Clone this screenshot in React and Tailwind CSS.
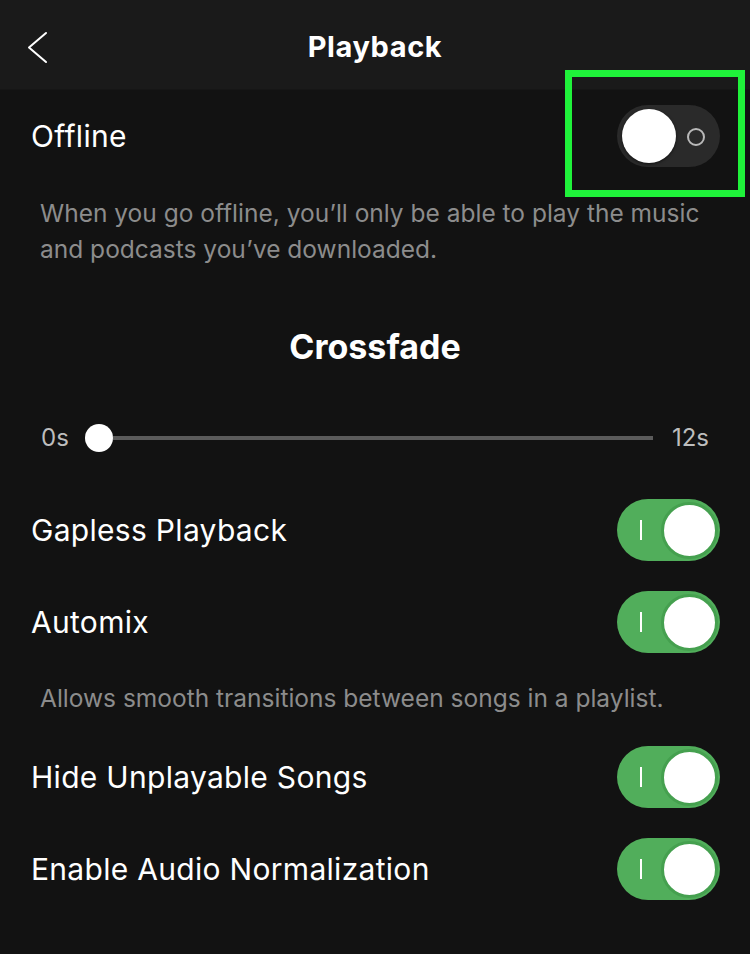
function OffToggle() {
  return (
    <div className="relative w-[103px] h-[62px] rounded-full bg-[#2a2a2a] shrink-0">
      <div className="absolute left-[5px] top-[4px] w-[54px] h-[54px] rounded-full bg-white shadow-[0_1px_3px_rgba(0,0,0,0.6)]"></div>
      <div className="absolute left-[70px] top-[23px] w-[18px] h-[18px] rounded-full border-2 border-[#b9b9b9]"></div>
    </div>
  )
}

function OnToggle() {
  return (
    <div className="relative w-[103px] h-[62px] rounded-full bg-[#51ae5b] shrink-0">
      <div className="absolute left-[23px] top-[21px] w-[2px] h-[20px] bg-white"></div>
      <div className="absolute right-[2px] top-[3px] w-[57px] h-[57px] rounded-full bg-white border-[3px] border-[#45a04f]"></div>
    </div>
  )
}

function Row({ label, children }) {
  return (
    <div className="h-[92px] flex items-center justify-between pl-[31px] pr-[30px]">
      <span className="text-[30px] text-white tracking-[0.3px]">{label}</span>
      {children}
    </div>
  )
}

export default function App() {
  return (
    <div className="relative w-[750px] h-[954px] bg-[#121212] overflow-hidden" style={{ fontFamily: "Inter, 'Liberation Sans', sans-serif" }}>
      {/* header */}
      <div className="relative h-[90px] bg-[#1a1a1a] flex items-center justify-center border-b border-[#161616]">
        <svg className="absolute left-[26px] top-[31px]" width="24" height="34" viewBox="0 0 24 34" fill="none">
          <polyline points="20,2 3,16.5 20,31" stroke="white" strokeWidth="2" strokeLinecap="round" strokeLinejoin="round" />
        </svg>
        <h1 className="text-[29px] font-bold text-white tracking-[0.6px] mt-[4px]">Playback</h1>
      </div>

      <Row label="Offline">
        <OffToggle />
      </Row>
      <p className="px-[40px] pt-[13px] text-[24.5px] leading-[36px] text-[#8c8c8c] h-[83px]">
        When you go offline, you’ll only be able to play the music and podcasts you’ve downloaded.
      </p>

      <div className="h-[219px] flex flex-col">
        <h2 className="text-[34px] font-bold text-white text-center leading-[40px] mt-[62px]">Crossfade</h2>
        <div className="flex items-center pl-[41px] pr-[41px] mt-[53px]">
          <span className="text-[24px] text-[#bdbdbd] w-[44px]">0s</span>
          <div className="flex-1 flex items-center">
            <div className="w-[28px] h-[28px] rounded-full bg-white shrink-0"></div>
            <div className="flex-1 h-[4px] bg-[#5b5b5b]"></div>
          </div>
          <span className="text-[24px] text-[#bdbdbd] ml-[19px]">12s</span>
        </div>
      </div>

      <Row label="Gapless Playback">
        <OnToggle />
      </Row>
      <Row label="Automix">
        <OnToggle />
      </Row>
      <p className="px-[40px] pt-[13px] text-[24.5px] leading-[35px] text-[#8c8c8c] h-[63px]">
        Allows smooth transitions between songs in a playlist.
      </p>
      <Row label="Hide Unplayable Songs">
        <OnToggle />
      </Row>
      <Row label="Enable Audio Normalization">
        <OnToggle />
      </Row>

      {/* highlight box */}
      <div className="absolute left-[565px] top-[70px] w-[180px] h-[127px] border-[7px] border-[#1ff23a]"></div>
    </div>
  )
}
